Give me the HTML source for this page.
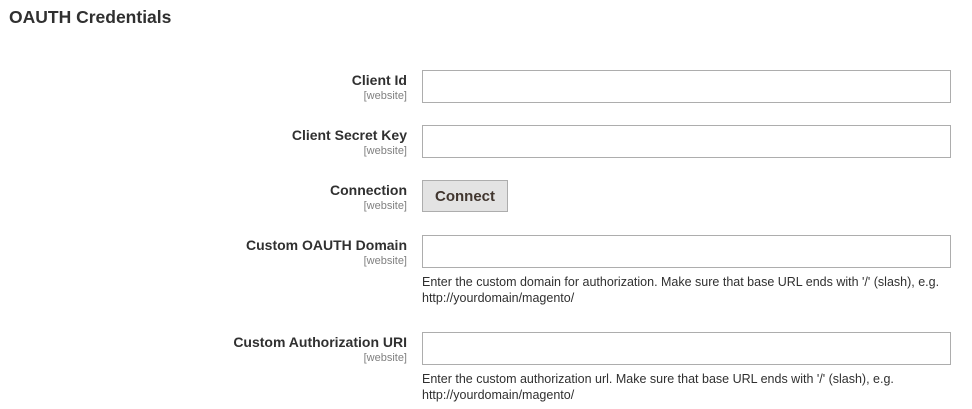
<!DOCTYPE html>
<html><head><style>
body{margin:0;width:972px;height:409px;background:#fff;font-family:"Liberation Sans",sans-serif;color:#303030;position:relative;overflow:hidden}
.t{position:absolute;left:9px;top:7px;font-size:17.5px;font-weight:bold;color:#303030}
.l{position:absolute;right:565px;text-align:right;font-size:14px;font-weight:bold;color:#303030;white-space:nowrap}
.s{position:absolute;right:565px;text-align:right;font-size:11px;color:#808080}
.i{position:absolute;left:422px;width:527px;height:31px;border:1px solid #adadad;background:#fff}
.b{position:absolute;left:422px;top:180px;width:84px;height:30px;border:1px solid #adadad;background:#e3e3e3;font-size:15px;font-weight:bold;color:#41362f;text-align:center;line-height:31px}
.n{position:absolute;left:422px;font-size:12.5px;line-height:16px;color:#303030;width:540px}
</style></head><body>
<div class="t">OAUTH Credentials</div>

<div class="l" style="top:72px">Client Id</div><div class="s" style="top:90px">[website]</div>
<div class="i" style="top:70px"></div>

<div class="l" style="top:127px">Client Secret Key</div><div class="s" style="top:145px">[website]</div>
<div class="i" style="top:125px"></div>

<div class="l" style="top:182px">Connection</div><div class="s" style="top:200px">[website]</div>
<div class="b">Connect</div>

<div class="l" style="top:237px">Custom OAUTH Domain</div><div class="s" style="top:255px">[website]</div>
<div class="i" style="top:235px"></div>
<div class="n" style="top:274px">Enter the custom domain for authorization. Make sure that base URL ends with '/' (slash), e.g.<br>http://yourdomain/magento/</div>

<div class="l" style="top:334px">Custom Authorization URI</div><div class="s" style="top:352px">[website]</div>
<div class="i" style="top:332px"></div>
<div class="n" style="top:371px">Enter the custom authorization url. Make sure that base URL ends with '/' (slash), e.g.<br>http://yourdomain/magento/</div>
</body></html>
